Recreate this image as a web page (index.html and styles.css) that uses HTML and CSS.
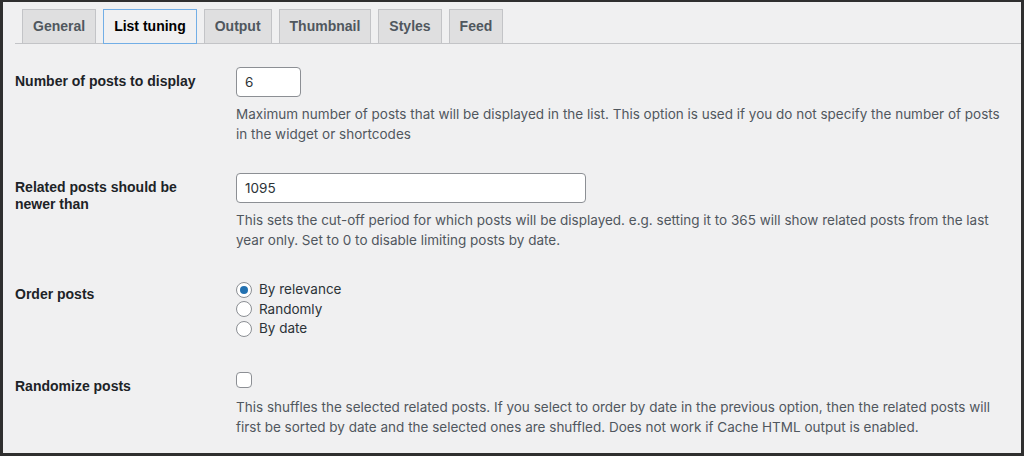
FILE: index.html
```html
<!DOCTYPE html>
<html lang="en">
<head>
<meta charset="utf-8">
<title>List tuning</title>
<link rel="stylesheet" href="styles.css">
</head>
<body>
<div class="frame">
  <nav class="tabs">
    <a class="tab">General</a>
    <a class="tab active">List tuning</a>
    <a class="tab">Output</a>
    <a class="tab">Thumbnail</a>
    <a class="tab">Styles</a>
    <a class="tab">Feed</a>
  </nav>
  <div class="form">
    <div class="row">
      <div class="label">Number of posts to display</div>
      <div class="field">
        <input class="text small" type="text" value="6">
        <p class="desc">Maximum number of posts that will be displayed in the list. This option is used if you do not specify the number of posts in the widget or shortcodes</p>
      </div>
    </div>
    <div class="row">
      <div class="label">Related posts should be newer than</div>
      <div class="field">
        <input class="text wide" type="text" value="1095">
        <p class="desc">This sets the cut-off period for which posts will be displayed. e.g. setting it to 365 will show related posts from the last year only. Set to 0 to disable limiting posts by date.</p>
      </div>
    </div>
    <div class="row">
      <div class="label">Order posts</div>
      <div class="field radios">
        <label class="opt"><input type="radio" name="order" class="radio" checked> By relevance</label>
        <label class="opt"><input type="radio" name="order" class="radio"> Randomly</label>
        <label class="opt"><input type="radio" name="order" class="radio"> By date</label>
      </div>
    </div>
    <div class="row">
      <div class="label">Randomize posts</div>
      <div class="field">
        <input type="checkbox" class="check">
        <p class="desc">This shuffles the selected related posts. If you select to order by date in the previous option, then the related posts will first be sorted by date and the selected ones are shuffled. Does not work if Cache HTML output is enabled.</p>
      </div>
    </div>
  </div>
</div>
</body>
</html>
```

FILE: styles.css
```css
* { box-sizing: border-box; }
html, body { margin: 0; padding: 0; }
body {
  font-family: "Liberation Sans", Arial, sans-serif;
  font-size: 14px;
  color: #1d2327;
  background: #f0f0f1;
}
.frame {
  width: 1024px;
  height: 456px;
  overflow: hidden;
  border-style: solid;
  border-color: #2f2f2f;
  border-width: 2px 3px 3px 3px;
  background: #f0f0f1;
  padding-left: 12px;
}
.tabs {
  display: flex;
  gap: 7px;
  padding: 7px 0 0 7px;
  border-bottom: 1px solid #c3c4c7;
}
.tab {
  display: block;
  padding: 5px 10px;
  line-height: 23px;
  font-size: 14px;
  font-weight: 600;
  color: #50575e;
  background: #dfdfe0;
  border: 1px solid #c3c4c7;
  margin-bottom: -1px;
  white-space: nowrap;
}
.tab.active {
  background: #f0f0f1;
  color: #000;
  border-color: #72aee6;
}
.form { margin-top: 8px; }
.row {
  display: flex;
  padding: 15px 0;
}
.row:first-child { padding-bottom: 14px; }
.label {
  width: 185px;
  margin-right: 36px;
  flex: none;
  font-weight: 700;
  line-height: 17px;
  padding-top: 6px;
  color: #1d2327;
}
.field {
  flex: 1;
  padding-right: 10px;
  font-family: Inter, "Liberation Sans", Arial, sans-serif;
  font-size: 13.5px;
}
.text {
  display: block;
  height: 30px;
  margin: 0;
  padding: 0 8px;
  border: 1px solid #8c8f94;
  border-radius: 4px;
  background: #fff;
  font-family: Inter, "Liberation Sans", Arial, sans-serif;
  font-size: 13.5px;
  color: #2c3338;
  outline: none;
}
.text.small { width: 65px; }
.text.wide { width: 350px; }
.desc {
  margin: 7px 0 0;
  line-height: 20px;
  color: #50575e;
}
.radios {
  display: flex;
  flex-direction: column;
  padding-bottom: 3px;
}
.opt {
  display: flex;
  align-items: center;
  line-height: 19.5px;
  color: #2c3338;
  gap: 7px;
}
.radio {
  appearance: none;
  -webkit-appearance: none;
  margin: 0;
  width: 16px;
  height: 16px;
  border: 1px solid #8c8f94;
  border-radius: 50%;
  background: #fff;
  display: grid;
  place-items: center;
}
.radio:checked::before {
  content: "";
  width: 8px;
  height: 8px;
  border-radius: 50%;
  background: #2271b1;
}
.check {
  appearance: none;
  -webkit-appearance: none;
  display: block;
  margin: 0;
  width: 16px;
  height: 16px;
  border: 1px solid #8c8f94;
  border-radius: 4px;
  background: #fff;
}
.check + .desc { margin-top: 9px; }
```
